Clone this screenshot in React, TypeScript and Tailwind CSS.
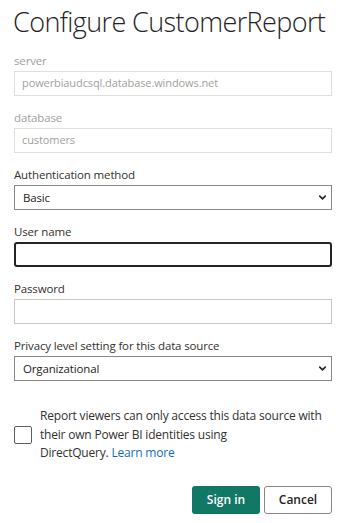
import { ChevronDown } from "lucide-react"

function Field({ label, muted, children }: { label: string; muted?: boolean; children: React.ReactNode }) {
  return (
    <div className="flex flex-col">
      <label className={`text-[11.5px] tracking-[-0.15px] leading-[16px] mb-[2px] ${muted ? "text-[#a19f9d]" : "text-[#323130]"}`}>{label}</label>
      {children}
    </div>
  )
}

function Select({ value }: { value: string }) {
  return (
    <div className="h-[25px] border border-[#8a8886] flex items-center justify-between pl-[8px] pr-[3px] text-[11.5px] tracking-[-0.15px] text-[#252423]">
      <span>{value}</span>
      <ChevronDown size={11} strokeWidth={3.5} />
    </div>
  )
}

export default function App() {
  return (
    <div className="w-[351px] h-[523px] bg-white pl-[14px] pr-[19px] pt-[4px] font-['Open_Sans',sans-serif] text-[#323130]">
      <h1 className="text-[27px] font-light leading-[36px] tracking-[-0.6px] text-[#252423] whitespace-nowrap -ml-[1px]">Configure CustomerReport</h1>

      <div className="mt-[13px] flex flex-col gap-[14px]">
        <Field label="server" muted>
          <div className="h-[25px] border border-[#e1dfdd] flex items-center px-[7px] text-[11px] tracking-[-0.1px] text-[#a19f9d]">
            powerbiaudcsql.database.windows.net
          </div>
        </Field>
        <Field label="database" muted>
          <div className="h-[25px] border border-[#e1dfdd] flex items-center px-[7px] text-[11px] tracking-[-0.1px] text-[#a19f9d]">
            customers
          </div>
        </Field>
        <Field label="Authentication method">
          <Select value="Basic" />
        </Field>
        <Field label="User name">
          <input className="h-[25px] border-2 border-[#252423] rounded-[3px] outline-none px-[7px] text-[12px]" />
        </Field>
        <Field label="Password">
          <input type="password" className="h-[25px] border border-[#c8c6c4] outline-none px-[7px] text-[12px]" />
        </Field>
        <Field label="Privacy level setting for this data source">
          <Select value="Organizational" />
        </Field>
      </div>

      <div className="mt-[26px] flex items-center gap-[8px]">
        <div className="w-[18px] h-[18px] border border-[#605e5c] rounded-[2px] shrink-0" />
        <p className="w-[292px] text-[12px] tracking-[-0.2px] leading-[18.5px] text-[#323130]">
          Report viewers can only access this data source with their own Power BI identities using
          <br />
          DirectQuery. <a className="text-[#0f6cbd]">Learn more</a>
        </p>
      </div>

      <div className="mt-[23px] flex justify-end gap-[4px]">
        <button className="w-[68px] h-[28px] bg-[#117865] text-white text-[12px] font-semibold rounded-[3px]">Sign in</button>
        <button className="w-[68px] h-[28px] bg-white border border-[#8a8886] text-[#252423] text-[12px] font-semibold rounded-[3px]">Cancel</button>
      </div>
    </div>
  )
}
